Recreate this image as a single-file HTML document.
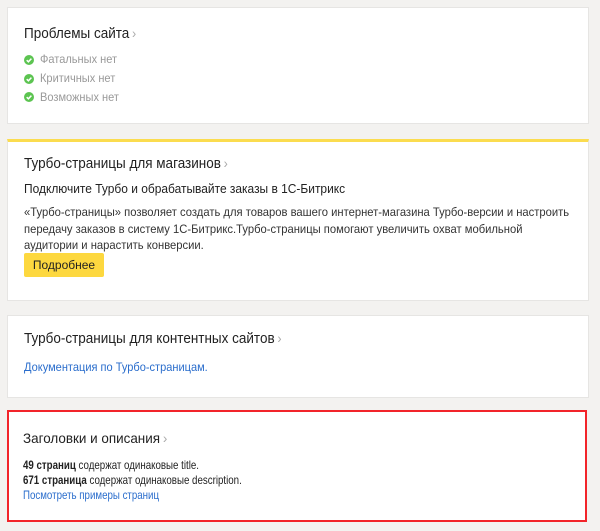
<!DOCTYPE html>
<html><head><meta charset="utf-8"><style>
body{margin:0;width:600px;height:531px;background:#f3f2f0;font-family:"Liberation Sans",Arial,sans-serif;position:relative;overflow:hidden;color:#000}
.c{position:absolute;left:7px;width:582px;background:#fff;border:1px solid #e6e5e3;box-sizing:border-box}
.t{position:absolute;left:16px;font-size:15px;color:#222;white-space:nowrap;transform-origin:0 0;transform:scaleX(0.9)}
.t span{color:#aaa;font-size:14px;margin-left:3px}
.a{position:absolute;left:16px;font-size:12px;white-space:nowrap;color:#333;transform-origin:0 0;transform:scaleX(0.92)}
.g{color:#999}
.ic{position:absolute;left:16px;width:10px;height:10px;border-radius:50%;background:#5cc451}
.ic svg{position:absolute;left:0;top:0}
.l{color:#2a6dcc}
</style></head><body>
<div class="c" style="top:7px;height:117px">
 <div class="t" style="top:17px">Проблемы сайта<span>›</span></div>
 <div class="ic" style="top:47px"><svg width="10" height="10"><path d="M2.7 5.2 L4.4 6.8 L7.4 3.6" stroke="#fff" stroke-width="1.5" fill="none"/></svg></div>
 <div class="a g" style="top:44px;left:32px">Фатальных нет</div>
 <div class="ic" style="top:66px"><svg width="10" height="10"><path d="M2.7 5.2 L4.4 6.8 L7.4 3.6" stroke="#fff" stroke-width="1.5" fill="none"/></svg></div>
 <div class="a g" style="top:63px;left:32px">Критичных нет</div>
 <div class="ic" style="top:84px"><svg width="10" height="10"><path d="M2.7 5.2 L4.4 6.8 L7.4 3.6" stroke="#fff" stroke-width="1.5" fill="none"/></svg></div>
 <div class="a g" style="top:82px;left:32px">Возможных нет</div>
</div>
<div class="c" style="top:139px;height:162px;border-top:3px solid #fbdc4f">
 <div class="t" style="top:13px">Турбо-страницы для магазинов<span>›</span></div>
 <div class="a" style="top:39px;font-size:13px;color:#222">Подключите Турбо и обрабатывайте заказы в 1С-Битрикс</div>
 <div class="a" style="top:62px;line-height:16.5px;color:#333;transform:scaleX(0.935)">«Турбо-страницы» позволяет создать для товаров вашего интернет-магазина Турбо-версии и настроить<br>передачу заказов в систему 1С-Битрикс.Турбо-страницы помогают увеличить охват мобильной<br>аудитории и нарастить конверсии.</div>
 <div style="position:absolute;left:16px;top:111px;width:80px;height:24px;background:#fdd83f;border-radius:2px;font-size:12px;line-height:24px;text-align:center;color:#222">Подробнее</div>
</div>
<div class="c" style="top:315px;height:83px">
 <div class="t" style="top:14px">Турбо-страницы для контентных сайтов<span>›</span></div>
 <div class="a l" style="top:44px">Документация по Турбо-страницам.</div>
</div>
<div class="c" style="top:410px;height:112px;width:580px;border:2px solid #f2242a">
 <div class="t" style="top:18px;left:14px;font-size:14px;transform:scaleX(0.96)">Заголовки и описания<span>›</span></div>
 <div class="a" style="top:46px;left:14px;color:#222;transform:scaleX(0.81)"><b>49 страниц</b> содержат одинаковые title.</div>
 <div class="a" style="top:61px;left:14px;color:#222;transform:scaleX(0.81)"><b>671 страница</b> содержат одинаковые description.</div>
 <div class="a l" style="top:76px;left:14px;transform:scaleX(0.81)">Посмотреть примеры страниц</div>
</div>
</body></html>
